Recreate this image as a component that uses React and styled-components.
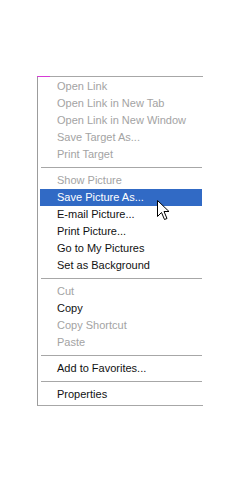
import React from "react";
import styled, { createGlobalStyle } from "styled-components";

const Global = createGlobalStyle`
  html, body {
    margin: 0;
    padding: 0;
    background: #fff;
  }
`;

const Page = styled.div`
  position: relative;
  width: 240px;
  height: 482px;
  padding: 76px 0 0 37px;
  box-sizing: border-box;
  font-family: "Liberation Sans", Arial, sans-serif;
`;

const Menu = styled.ul`
  position: relative;
  list-style: none;
  margin: 0;
  width: 166px;
  box-sizing: border-box;
  padding: 1px 1px 2px 2px;
  border-top: 1px solid #a7a7a7;
  border-left: 1px solid #9c9c9c;
  border-bottom: 1px solid #a7a7a7;
  background: #fff;
`;

const Accent = styled.span`
  position: absolute;
  left: -1px;
  top: -1px;
  width: 13px;
  height: 1px;
  background: #d63bd6;
`;

const Item = styled.li`
  height: 17px;
  line-height: 17px;
  padding-left: 17px;
  font-size: 11px;
  white-space: nowrap;
  color: ${(p) => (p.$disabled ? "#a3a3a3" : p.$active ? "#fff" : "#111")};
  background: ${(p) => (p.$active ? "#316ac5" : "transparent")};
`;

const Separator = styled.li`
  height: 1px;
  margin: 4px 0 4px 1px;
  background: #a7a7a7;
`;

const Cursor = styled.svg`
  position: absolute;
  left: 157px;
  top: 200px;
`;

const groups = [
  [
    { label: "Open Link", disabled: true },
    { label: "Open Link in New Tab", disabled: true },
    { label: "Open Link in New Window", disabled: true },
    { label: "Save Target As...", disabled: true },
    { label: "Print Target", disabled: true },
  ],
  [
    { label: "Show Picture", disabled: true },
    { label: "Save Picture As...", active: true },
    { label: "E-mail Picture..." },
    { label: "Print Picture..." },
    { label: "Go to My Pictures" },
    { label: "Set as Background" },
  ],
  [
    { label: "Cut", disabled: true },
    { label: "Copy" },
    { label: "Copy Shortcut", disabled: true },
    { label: "Paste", disabled: true },
  ],
  [{ label: "Add to Favorites..." }],
  [{ label: "Properties" }],
];

export default function App() {
  return (
    <Page>
      <Global />
      <Menu>
        <Accent />
        {groups.map((g, gi) => (
          <React.Fragment key={gi}>
            {gi > 0 && <Separator />}
            {g.map((it) => (
              <Item key={it.label} $disabled={it.disabled} $active={it.active}>
                {it.label}
              </Item>
            ))}
          </React.Fragment>
        ))}
      </Menu>
      <Cursor width="13" height="22" viewBox="0 0 13 22">
        <path
          d="M0.5 0.5 L0.5 16.5 L4.5 12.5 L7.5 19.5 L10 18.5 L7 11.5 L12 11.5 Z"
          fill="#fff"
          stroke="#000"
          strokeWidth="1"
          strokeLinejoin="miter"
        />
      </Cursor>
    </Page>
  );
}
